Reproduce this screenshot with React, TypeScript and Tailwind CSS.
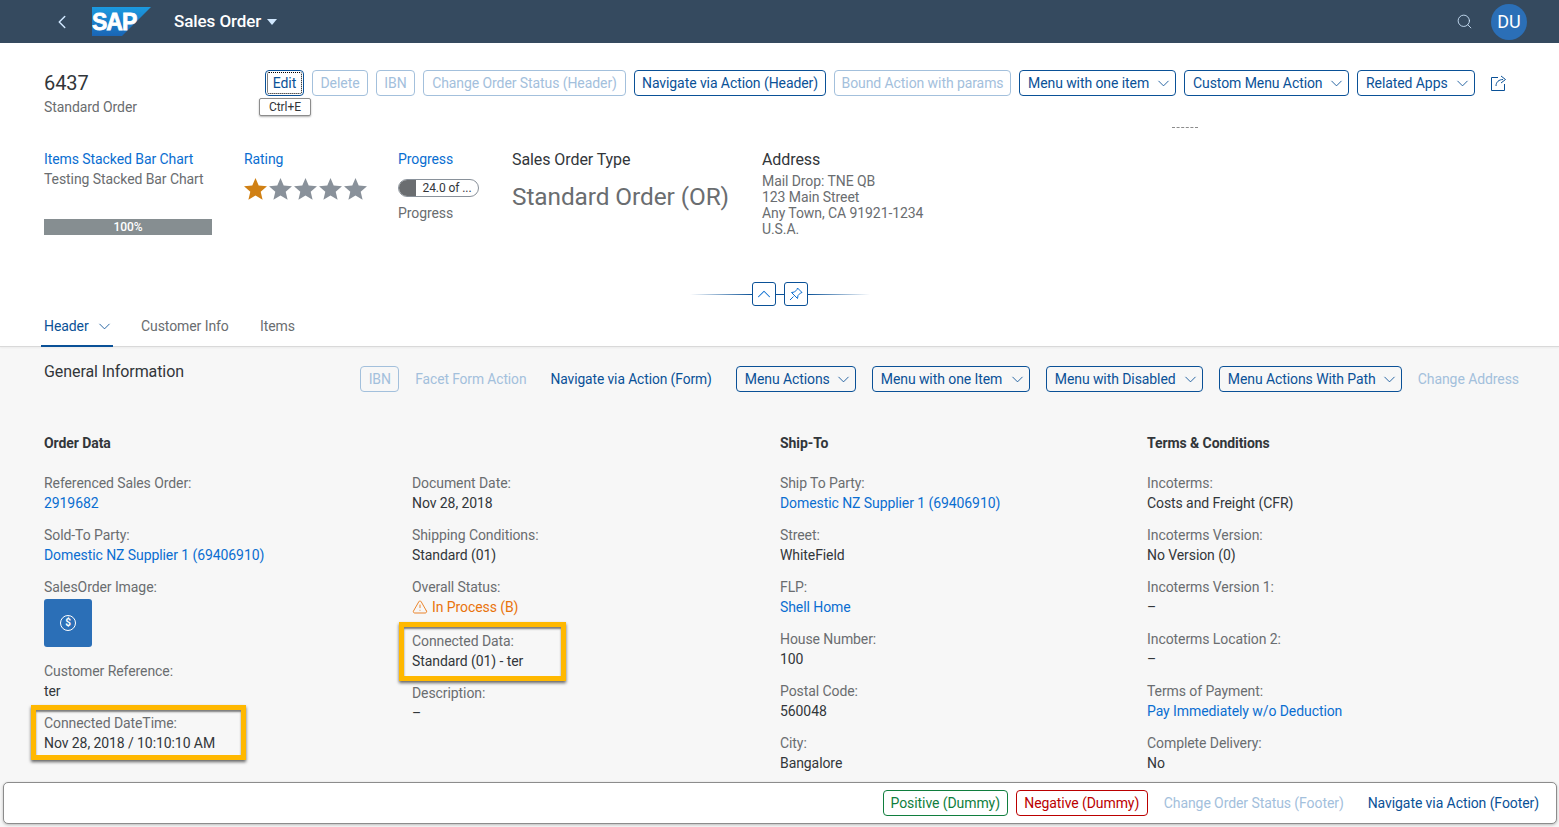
import { ChevronDown, ChevronLeft, ChevronUp, Search, TriangleAlert } from 'lucide-react';
import * as React from 'react';

const font = { fontFamily: 'Roboto, sans-serif' };

function Btn({ label, menu, off, cls = '' }: { label: string; menu?: boolean; off?: boolean; cls?: string }) {
  return (
    <div
      className={`h-[26px] shrink-0 rounded-[4px] border flex items-center text-sm whitespace-nowrap ${
        menu ? 'justify-between pl-2 pr-[2px]' : 'justify-center'
      } ${off ? 'border-[#a3c0dc] text-[#a3c0dc]' : 'border-[#0a5197] text-[#0a5197]'} ${cls}`}
    >
      <span>{label}</span>
      {menu && <ChevronDown size={19} strokeWidth={1.1} />}
    </div>
  );
}

function Field({ label, value, link, cls = 'h-[52px]' }: { label: string; value: string; link?: boolean; cls?: string }) {
  return (
    <div className={`text-sm leading-5 ${cls}`}>
      <div className="text-[#6a6d70]">{label}</div>
      <div className={link ? 'text-[#0a6ed1]' : 'text-[#32363a]'}>{value}</div>
    </div>
  );
}

function Star({ on }: { on?: boolean }) {
  return (
    <svg width="25" height="24" viewBox="0 0 24 24">
      <path d="M12 1l3.2 7.6 8.3.7-6.3 5.4 1.9 8.1L12 18.5l-7.1 4.3 1.9-8.1L.5 9.3l8.3-.7z" fill={on ? '#d08014' : '#89919a'} />
    </svg>
  );
}

function Highlight({ children, cls = '' }: { children: React.ReactNode; cls?: string }) {
  return <div className={`border-[5px] border-[#ffb800] shadow-[0_2px_3px_rgba(0,0,0,0.6),inset_0_2px_2px_rgba(0,0,0,0.5)] ${cls}`}>{children}</div>;
}

export default function App() {
  return (
    <div className="h-[827px] w-[1559px] overflow-hidden bg-white flex flex-col relative tracking-[-0.005em]" style={font}>
      {/* shell bar */}
      <div className="h-[43px] shrink-0 bg-[#354a5f] flex items-center text-white">
        <ChevronLeft size={22} strokeWidth={1.6} className="ml-[51px] text-[#d1e8ff]" />
        <svg width="60" height="30" viewBox="0 0 60 30" className="ml-[19px]">
          <defs>
            <linearGradient id="sapg" x1="0" y1="0" x2="0" y2="1">
              <stop offset="0" stopColor="#1b9ae0" />
              <stop offset="1" stopColor="#1a65b5" />
            </linearGradient>
          </defs>
          <path d="M0 0H59L30 29H0Z" fill="url(#sapg)" />
          <text x="0" y="23" fontSize="23" fontWeight="700" fill="#fff" stroke="#fff" strokeWidth="0.8" style={{ fontFamily: '"Liberation Sans", sans-serif' }} letterSpacing="-1">SAP</text>
        </svg>
        <span className="ml-[22px] text-[17px] font-medium">Sales Order</span>
        <svg width="10" height="6" viewBox="0 0 10 6" className="ml-[6px]"><path d="M0 0h10L5 6z" fill="#d1e8ff" /></svg>
        <div className="flex-1" />
        <Search size={17} strokeWidth={1.2} className="text-[#d1e8ff]" />
        <div className="ml-[18px] mr-[32px] w-[36px] h-[36px] rounded-full bg-[#2b6fb7] flex items-center justify-center text-lg">DU</div>
      </div>

      {/* object header */}
      <div className="h-[262px] shrink-0 pl-[44px] relative">
        <div className="flex items-start pt-[27px]">
          <div className="w-[221px]">
            <div className="text-xl leading-[26px] text-[#32363a]">6437</div>
            <div className="text-sm leading-[20px] mt-[1px] text-[#6a6d70]">Standard Order</div>
          </div>
          <div className="flex items-center gap-2">
            <Btn label="Edit" cls="w-[39px] outline outline-1 outline-dotted outline-black -outline-offset-3" />
            <Btn label="Delete" off cls="w-[56px]" />
            <Btn label="IBN" off cls="w-[39px]" />
            <Btn label="Change Order Status (Header)" off cls="w-[203px]" />
            <Btn label="Navigate via Action (Header)" cls="w-[192px]" />
            <Btn label="Bound Action with params" off cls="w-[177px]" />
            <Btn label="Menu with one item" menu cls="w-[157px]" />
            <Btn label="Custom Menu Action" menu cls="w-[165px]" />
            <Btn label="Related Apps" menu cls="w-[118px]" />
            <svg width="16" height="16" viewBox="0 0 16 16" fill="none" stroke="#0a5197" strokeWidth="1" className="ml-2">
              <path d="M7 2.500H.5v13h13V9" />
              <path d="M5 11c0-4 3-6.500 7-6.500M10 1l4.500 3.500L10 8" />
            </svg>
          </div>
        </div>
        <div className="absolute left-[259px] top-[55px] h-[18px] px-[9px] rounded-[2px] bg-white border border-[#8c8c8c] shadow-[0_1px_2px_rgba(0,0,0,0.3)] text-xs leading-[16px] text-[#32363a]">Ctrl+E</div>
        <div className="absolute left-[1172px] top-[84px] w-[26px] h-px border-t border-dashed border-[#8c8c8c]" />

        <div className="flex mt-[32px] text-sm leading-5">
          <div className="w-[200px]">
            <div className="text-[#0a6ed1]">Items Stacked Bar Chart</div>
            <div className="text-[#6a6d70]">Testing Stacked Bar Chart</div>
            <div className="mt-[30px] w-[168px] h-4 bg-[#868e91] text-white text-xs leading-4 text-center font-medium">100%</div>
          </div>
          <div className="w-[154px]">
            <div className="text-[#0a6ed1]">Rating</div>
            <div className="flex mt-[8px] -ml-[1px]">
              <Star on /><Star /><Star /><Star /><Star />
            </div>
          </div>
          <div className="w-[114px]">
            <div className="text-[#0a6ed1]">Progress</div>
            <div className="mt-[10px] w-[81px] h-[18px] rounded-full border border-[#89919a] flex overflow-hidden">
              <div className="w-[17px] bg-[#6a6d70]" />
              <div className="flex-1 text-xs leading-4 text-center text-[#32363a]">24.0 of ...</div>
            </div>
            <div className="mt-[6px] text-[#6a6d70]">Progress</div>
          </div>
          <div className="w-[250px]">
            <div className="mt-px text-base leading-5 text-[#32363a]">Sales Order Type</div>
            <div className="mt-[11px] text-[24.4px] leading-8 text-[#6a6d70]">Standard Order (OR)</div>
          </div>
          <div>
            <div className="mt-px text-base leading-5 text-[#32363a]">Address</div>
            <div className="mt-[3px] leading-4 text-[#6a6d70]">
              <div>Mail Drop: TNE QB</div>
              <div>123 Main Street</div>
              <div>Any Town, CA 91921-1234</div>
              <div>U.S.A.</div>
            </div>
          </div>
        </div>

        {/* collapse / pin */}
        <div className="absolute left-[690px] top-[239px] flex items-center">
          <div className="w-[62px] h-px bg-gradient-to-r from-transparent to-[#0a5197]" />
          <div className="w-6 h-6 rounded-[3px] border border-[#0a5197] flex items-center justify-center"><ChevronUp size={22} strokeWidth={1.1} className="text-[#0a6ed1]" /></div>
          <div className="w-2 h-px bg-[#0a5197]" />
          <div className="w-6 h-6 rounded-[3px] border border-[#0a5197] flex items-center justify-center">
            <svg width="14" height="14" viewBox="0 0 14 14" fill="none" stroke="#0a6ed1" strokeWidth="1">
              <path d="M8.500 1l4.500 4.500-1.500.5-2.500 2.500-.5 3-6-6 3-.5L8 2.500zM4.500 9.500L1 13" />
            </svg>
          </div>
          <div className="w-[62px] h-px bg-gradient-to-r from-[#0a5197] to-transparent" />
        </div>
      </div>

      {/* tabs */}
      <div className="h-[42px] shrink-0 flex items-start pl-[44px] text-sm border-b border-[#d9d9d9] shadow-[0_1px_2px_rgba(0,0,0,0.05)] relative">
        <div className="flex items-center gap-[6px] text-[#0a5197] leading-[42px] h-[42px] w-[97px] relative">
          Header <ChevronDown size={19} strokeWidth={1.1} />
          <div className="absolute left-[-3px] right-[28px] bottom-0 h-[2px] bg-[#0a5197]" />
        </div>
        <div className="text-[#6a6d70] leading-[42px] w-[119px]">Customer Info</div>
        <div className="text-[#6a6d70] leading-[42px]">Items</div>
      </div>

      {/* section */}
      <div className="flex-1 bg-[#f7f7f7] pl-[44px] pr-[40px] pt-[13px] overflow-hidden">
        <div className="flex items-start">
          <div className="text-base leading-6 text-[#32363a]">General Information</div>
          <div className="flex-1 flex items-center justify-end mt-[6px] gap-4">
            <Btn label="IBN" off cls="w-[39px]" />
            <span className="whitespace-nowrap text-[13.8px] text-[#a3c0dc]">Facet Form Action</span>
            <span className="whitespace-nowrap ml-2 text-[13.8px] text-[#0a5197]">Navigate via Action (Form)</span>
            <Btn label="Menu Actions" menu cls="w-[120px] ml-2" />
            <Btn label="Menu with one Item" menu cls="w-[158px]" />
            <Btn label="Menu with Disabled" menu cls="w-[157px]" />
            <Btn label="Menu Actions With Path" menu cls="w-[183px]" />
            <span className="whitespace-nowrap text-sm text-[#a3c0dc]">Change Address</span>
          </div>
        </div>

        <div className="grid grid-cols-[368px_368px_367px_1fr] mt-[41px] text-sm">
          <div>
            <div className="font-bold leading-5 h-[40px] text-[#32363a]">Order Data</div>
            <Field label="Referenced Sales Order:" value="2919682" link />
            <Field label="Sold-To Party:" value="Domestic NZ Supplier 1 (69406910)" link />
            <div className="leading-5 text-[#6a6d70]">SalesOrder Image:</div>
            <div className="mt-[2px] w-12 h-12 rounded-[3px] bg-[#2b6fb7] flex items-center justify-center">
              <div className="w-4 h-4 rounded-full border border-white text-white text-[10px] font-bold leading-[14px] text-center">$</div>
            </div>
            <Field label="Customer Reference:" value="ter" cls="h-[52px] mt-[14px]" />
            <Highlight cls="w-[215px] -ml-[13px] -mt-[8px] pl-2"><Field label="Connected DateTime:" value="Nov 28, 2018 / 10:10:10 AM" cls="h-[45px] pt-[3px]" /></Highlight>
          </div>
          <div className="pt-[40px]">
            <Field label="Document Date:" value="Nov 28, 2018" />
            <Field label="Shipping Conditions:" value="Standard (01)" />
            <div className="h-[45px] leading-5">
              <div className="text-[#6a6d70]">Overall Status:</div>
              <div className="flex items-center gap-1 text-[#e9730c]"><TriangleAlert size={16} strokeWidth={1.3} />In Process (B)</div>
            </div>
            <Highlight cls="w-[167px] -ml-[13px] pl-2"><Field label="Connected Data:" value="Standard (01) - ter" cls="h-[49px] pt-[4px]" /></Highlight>
            <Field label="Description:" value="–" cls="h-[52px] mt-[2px]" />
          </div>
          <div>
            <div className="font-bold leading-5 h-[40px] text-[#32363a]">Ship-To</div>
            <Field label="Ship To Party:" value="Domestic NZ Supplier 1 (69406910)" link />
            <Field label="Street:" value="WhiteField" />
            <Field label="FLP:" value="Shell Home" link />
            <Field label="House Number:" value="100" />
            <Field label="Postal Code:" value="560048" />
            <Field label="City:" value="Bangalore" />
          </div>
          <div>
            <div className="font-bold leading-5 h-[40px] text-[#32363a]">Terms &amp; Conditions</div>
            <Field label="Incoterms:" value="Costs and Freight (CFR)" />
            <Field label="Incoterms Version:" value="No Version (0)" />
            <Field label="Incoterms Version 1:" value="–" />
            <Field label="Incoterms Location 2:" value="–" />
            <Field label="Terms of Payment:" value="Pay Immediately w/o Deduction" link />
            <Field label="Complete Delivery:" value="No" />
          </div>
        </div>
      </div>

      {/* floating footer */}
      <div className="absolute left-[3px] right-[2px] top-[782px] h-[42px] bg-white rounded-[5px] border border-[#8c8c8c] shadow-[0_1px_3px_rgba(0,0,0,0.25)] flex items-center justify-end pr-[17px] text-sm">
        <div className="h-[26px] w-[125px] rounded-[4px] border border-[#107e3e] text-[#107e3e] flex items-center justify-center">Positive (Dummy)</div>
        <div className="h-[26px] w-[132px] ml-[8px] rounded-[4px] border border-[#bb0000] text-[#bb0000] flex items-center justify-center">Negative (Dummy)</div>
        <span className="ml-[16px] text-[#a3c0dc]">Change Order Status (Footer)</span>
        <span className="ml-[24px] text-[#0a5197]">Navigate via Action (Footer)</span>
      </div>
    </div>
  );
}
